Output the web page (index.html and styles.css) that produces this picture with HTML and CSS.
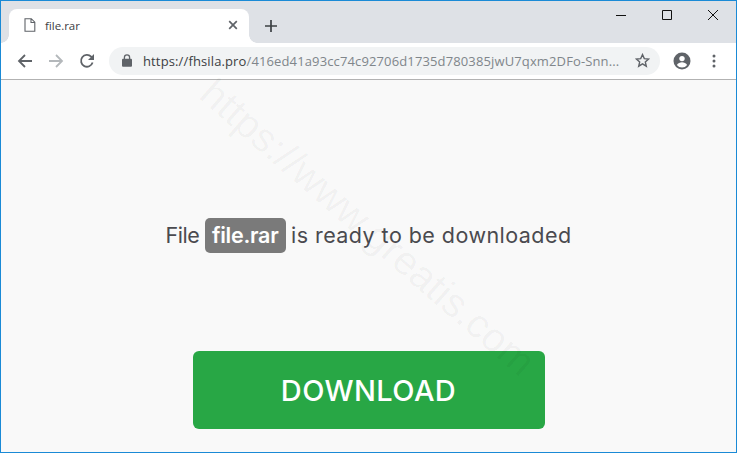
FILE: index.html
```html
<!DOCTYPE html>
<html lang="en">
<head>
<meta charset="utf-8">
<title>file.rar</title>
<link rel="stylesheet" href="styles.css">
</head>
<body>
<div class="window">
  <header class="tabstrip">
    <div class="tab">
      <svg class="tab-file" width="12" height="14" viewBox="0 0 12 14"><path d="M1 .7h6.300L10.800 4.200V13.300H1Z M7 .7V4.500h3.800" fill="none" stroke="#5f6368" stroke-width="1.100"/></svg>
      <span class="tab-title">file.rar</span>
      <svg class="tab-close" width="10" height="10" viewBox="0 0 10 10"><path d="M1.200 1.200l7.600 7.600M8.800 1.200L1.200 8.800" stroke="#5f6368" stroke-width="1.700"/></svg>
    </div>
    <svg class="new-tab" width="14" height="14" viewBox="0 0 14 14"><path d="M7 1v12M1 7h12" stroke="#3c4043" stroke-width="1.700"/></svg>
    <div class="win-controls">
      <svg width="12" height="12" viewBox="0 0 12 12"><path d="M1 6.500h10" stroke="#111" stroke-width="1"/></svg>
      <svg width="12" height="12" viewBox="0 0 12 12"><path d="M1.500 1.500h9v9h-9Z" fill="none" stroke="#111" stroke-width="1"/></svg>
      <svg width="12" height="12" viewBox="0 0 12 12"><path d="M1 1l10 10M11 1L1 11" stroke="#111" stroke-width="1"/></svg>
    </div>
  </header>
  <nav class="toolbar">
    <svg class="nav-icon" width="16" height="16" viewBox="0 0 16 16"><path d="M15 8H2M8 2L2 8l6 6" fill="none" stroke="#5f6368" stroke-width="1.800"/></svg>
    <svg class="nav-icon" width="16" height="16" viewBox="0 0 16 16"><path d="M1 8h13M8 2l6 6-6 6" fill="none" stroke="#b4b8bb" stroke-width="1.800"/></svg>
    <svg class="nav-icon" width="16" height="16" viewBox="0 0 16 16"><path d="M13.600 9.600A5.900 5.900 0 1 1 12.200 3.700L14 5.500" fill="none" stroke="#5f6368" stroke-width="1.800"/><path d="M15 1v6H9Z" fill="#5f6368"/></svg>
    <div class="omnibox">
      <svg class="lock" width="10" height="13" viewBox="0 0 10 13"><path d="M2.400 5V3.400a2.600 2.600 0 0 1 5.200 0V5" fill="none" stroke="#5f6368" stroke-width="1.300"/><rect y="4.800" width="10" height="8" rx="1" fill="#5f6368"/></svg>
      <span class="url"><span class="url-host">https://fhsila.pro</span>/416ed41a93cc74c92706d1735d780385jwU7qxm2DFo-Snn...</span>
      <svg class="star" width="15" height="15" viewBox="0 0 15 15"><path d="M7.500 1.600l1.800 4 4.300.4-3.300 2.900 1 4.300-3.800-2.300-3.800 2.300 1-4.300L1.400 6l4.300-.4Z" fill="none" stroke="#5f6368" stroke-width="1.400"/></svg>
    </div>
    <svg class="avatar" width="18" height="18" viewBox="0 0 18 18"><circle cx="9" cy="9" r="8.500" fill="#5f6368"/><circle cx="9" cy="6.600" r="2.700" fill="#fff"/><path d="M3.900 13c1-1.900 3.100-2.700 5.100-2.700s4.100.8 5.100 2.700A6.500 6.500 0 0 1 9 15.600 6.500 6.500 0 0 1 3.900 13Z" fill="#fff"/></svg>
    <svg class="menu" width="4" height="14" viewBox="0 0 4 14"><circle cx="2" cy="2" r="1.500" fill="#5f6368"/><circle cx="2" cy="7" r="1.500" fill="#5f6368"/><circle cx="2" cy="12" r="1.500" fill="#5f6368"/></svg>
  </nav>
  <main class="page">
    <p class="message"><span class="lead">File</span> <span class="badge">file.rar</span> is ready to be downloaded</p>
    <a class="download" href="#">DOWNLOAD</a>
    <div class="watermark">https://www.greatis.com</div>
  </main>
</div>
</body>
</html>
```
FILE: styles.css
```css
* { box-sizing: border-box; }
html, body { margin: 0; height: 100%; overflow: hidden; }
.window {
  width: 737px;
  height: 453px;
  border: 1px solid #1a8ad6;
  display: flex;
  flex-direction: column;
  font-family: "Open Sans", "Noto Sans", sans-serif;
  background: #fff;
}
.tabstrip {
  height: 42px;
  flex: none;
  background: #dee1e6;
  display: flex;
  align-items: flex-end;
  padding-left: 8px;
  position: relative;
}
.tab {
  width: 240px;
  height: 34px;
  background: #fff;
  border-radius: 8px 8px 0 0;
  display: flex;
  align-items: center;
  padding: 0 11px 2px 15px;
  position: relative;
}
.tab::before, .tab::after {
  content: "";
  position: absolute;
  bottom: 0;
  width: 8px;
  height: 8px;
}
.tab::before { left: -8px; background: radial-gradient(circle at 0 0, #dee1e6 7.5px, #fff 8px); }
.tab::after { right: -8px; background: radial-gradient(circle at 100% 0, #dee1e6 7.5px, #fff 8px); }
.tab-title {
  margin-left: 9px;
  font-size: 11.5px;
  color: #3c4043;
  flex: 1;
}
.new-tab { margin: 0 0 10px 15px; }
.win-controls {
  position: absolute;
  top: 8px;
  right: 17px;
  display: flex;
  gap: 34px;
}
.toolbar {
  height: 37px;
  flex: none;
  background: #fff;
  border-bottom: 1px solid #b2b2b2;
  display: flex;
  align-items: center;
  padding: 0 0 1px 16px;
}
.nav-icon { margin-right: 15px; flex: none; }
.nav-icon:nth-child(3) { margin-right: 14px; }
.omnibox {
  width: 551px;
  height: 28px;
  border-radius: 14px;
  background: #f1f3f4;
  display: flex;
  align-items: center;
  padding: 0 10px 0 13px;
  flex: none;
}
.lock { flex: none; }
.url {
  margin-left: 11px;
  font-size: 13px;
  letter-spacing: 0.13px;
  color: #80868b;
  white-space: nowrap;
  overflow: hidden;
  flex: 1;
}
.url-host { color: #3c4043; }
.star { flex: none; }
.avatar { margin-left: 13px; flex: none; }
.menu { margin-left: 21px; flex: none; }
.page {
  flex: 1;
  background: #f9f9f9;
  position: relative;
  display: flex;
  flex-direction: column;
  align-items: center;
  font-family: "Inter", "Lato", sans-serif;
}
.message {
  margin: 138px 0 0;
  height: 35px;
  line-height: 35px;
  font-size: 21.5px;
  letter-spacing: 0.45px;
  color: #4a4a4f;
  white-space: nowrap;
}
.lead { letter-spacing: -0.4px; }
.badge {
  display: inline-block;
  margin: 0 -1px;
  background: #7a7a7a;
  color: #fff;
  font-weight: 600;
  letter-spacing: -0.25px;
  border-radius: 5px;
  height: 35px;
  padding: 0 7px;
}
.download {
  margin-top: 98px;
  width: 352px;
  height: 78px;
  border-radius: 6px;
  background: #28a745;
  color: #fff;
  font-size: 29px;
  font-weight: 500;
  letter-spacing: 0.4px;
  text-decoration: none;
  display: flex;
  align-items: center;
  justify-content: center;
}
.watermark {
  position: absolute;
  left: 153px;
  top: 127px;
  font-family: "Liberation Sans", sans-serif;
  font-size: 40.5px;
  line-height: 1;
  color: rgba(0, 0, 0, 0.04);
  white-space: nowrap;
  transform: rotate(41deg);
  pointer-events: none;
}
```
